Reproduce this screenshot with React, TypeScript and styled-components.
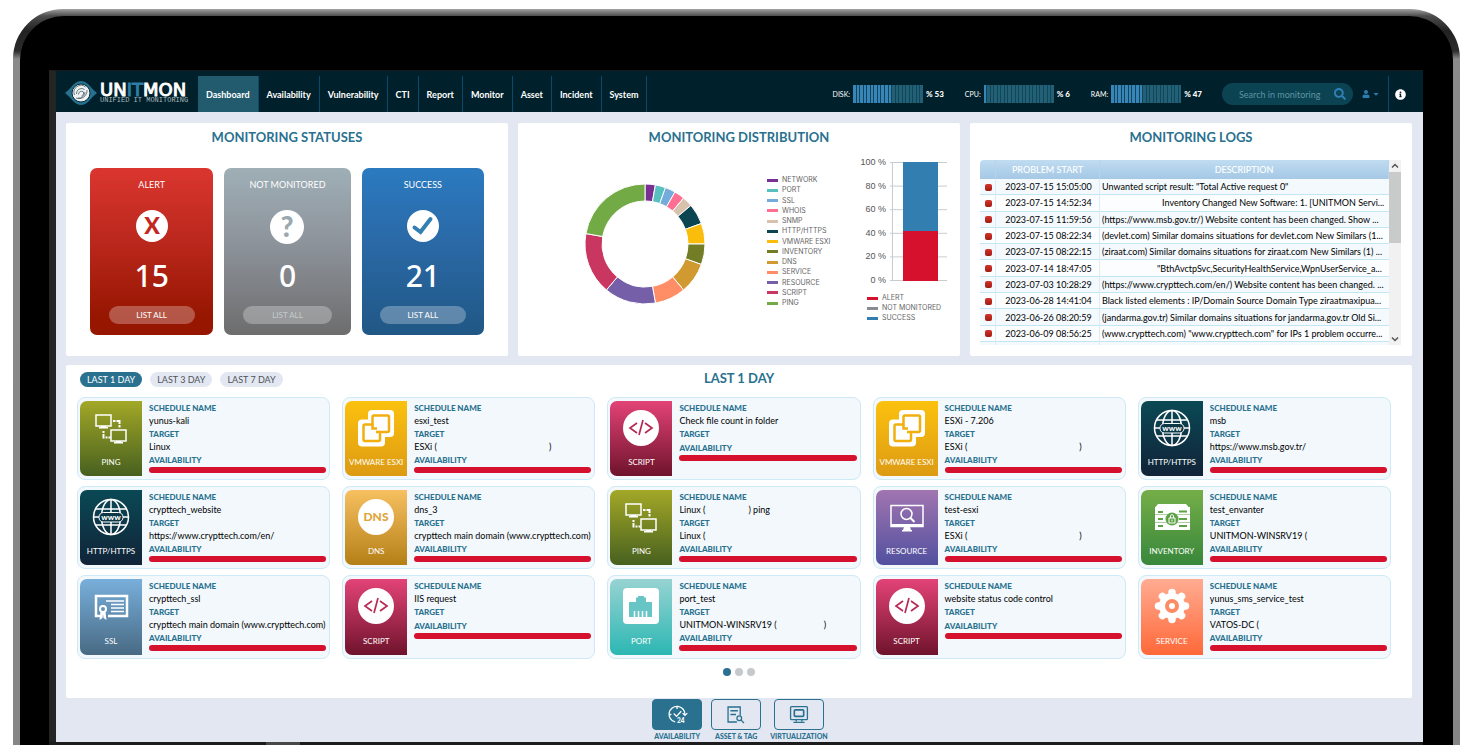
import React from "react";
import styled, { createGlobalStyle } from "styled-components";
import { FaUser, FaCaretDown, FaInfoCircle, FaSearch } from "react-icons/fa";

const C = {
  header: "#00212b",
  tab: "#225b6e",
  line: "#0b4a6b",
  page: "#e3e7f2",
  title: "#29718f",
  blue: "#337eb0",
  red: "#d6112d",
  card: "#f2f8fc",
  cardLine: "#cdeaf6",
};

const GlobalStyle = createGlobalStyle`
  *, *::before, *::after { box-sizing: border-box; }
  html { overflow: hidden auto; scrollbar-width: none; }
  body {
    margin: 0;
    background: #fff;
    font-family: Lato, "Liberation Sans", sans-serif;
    font-size: 9px;
    line-height: 13px;
    color: #000;
  }
  h2, p, ul, dl, dd { margin: 0; padding: 0; }
  ul { list-style: none; }
  svg { overflow: visible; }
  button, input { font: inherit; border: 0; padding: 0; margin: 0; background: none; color: inherit; }
  button { cursor: pointer; }
  a { color: inherit; text-decoration: none; }
`;

/* Device */
const Stage = styled.div`
  display: flex;
  min-height: 100vh;
  padding: 9px 15px 0 13px;
`;
const Frame = styled.div`
  flex: 1;
  min-width: 0;
  display: flex;
  padding: 7px 7px 0;
  border-radius: 50px 50px 0 0;
  background: linear-gradient(#a2a2a2 0, #4c4c4c 7px, #222 22px, #2c2c2c 42px, #8a8a8a 50px, #868686 100%);
`;
const Bezel = styled.div`
  flex: 1;
  min-width: 0;
  display: flex;
  flex-direction: column;
  padding: 54px 30px 0 29px;
  border-radius: 44px 44px 0 0;
  background: #000;
`;
const Screen = styled.div`
  flex: 1;
  display: flex;
  flex-direction: column;
  border-left: 7px solid #242424;
  border-top: 1px solid #1a1a1a;
  background: ${C.page};
`;
const Chin = styled.div`
  height: 3px;
  padding-left: 217px;
  background: #1c1c1c;
`;
const Notch = styled.div`
  width: 34px;
  height: 3px;
  background: #484848;
`;

/* Header */
const Header = styled.header`
  display: flex;
  height: 41px;
  padding: 5px 17px 0 9px;
  background: ${C.header};
  color: #fff;
`;
const Logo = styled.a`
  display: flex;
  align-items: center;
  gap: 3px;
  width: 133px;
  padding-bottom: 3px;
`;
const Brand = styled.span`
  display: block;
  padding-top: 1px;
`;
const BrandName = styled.span`
  display: block;
  font: 18px/14px "DejaVu Sans", sans-serif;
  -webkit-text-stroke: 1px currentColor;
  b { font-weight: 400; color: #2f7da6; }
`;
const BrandLine = styled.span`
  display: block;
  font: 7px/7px "Liberation Mono", monospace;
  white-space: nowrap;
  color: #a9b8be;
`;
const Nav = styled.nav`
  display: flex;
`;
const NavLink = styled.a<{ $active?: boolean }>`
  display: flex;
  align-items: center;
  padding: 0 8px;
  border-right: 1px solid ${C.line};
  background: ${(p) => (p.$active ? C.tab : "transparent")};
  font-size: 9px;
  font-weight: 700;
`;
const Tools = styled.div`
  display: flex;
  align-items: center;
  margin-left: auto;
`;
const Meters = styled.div`
  display: flex;
  gap: 21px;
  margin-right: 20px;
`;
const Meter = styled.div`
  display: flex;
  align-items: center;
  gap: 3px;
  font-size: 7px;
  b { font-size: 8px; font-weight: 900; }
`;
const Segments = styled.div`
  display: grid;
  grid-template-columns: repeat(20, 1fr);
  gap: 1px;
  width: 70px;
  height: 18px;
  background: #13455a;
`;
const Segment = styled.span<{ $on: boolean }>`
  background: ${(p) => (p.$on ? "#3885b9" : "#226076")};
`;
const Search = styled.form`
  display: flex;
  align-items: center;
  width: 131px;
  height: 22px;
  padding: 0 7px 0 17px;
  border-radius: 11px;
  background: #0b4352;
  color: #2f80b5;
  input { flex: 1; min-width: 0; outline: 0; font-size: 9px; }
  input::placeholder { color: #5f93a3; opacity: 1; }
  button { display: flex; }
`;
const UserMenu = styled.button`
  display: flex;
  align-items: center;
  gap: 2px;
  height: 36px;
  padding: 0 8px 0 9px;
  border-right: 1px solid ${C.line};
  color: #2c7cb0;
`;
const InfoButton = styled.button`
  display: flex;
  margin-left: 6px;
`;

/* Panels */
const Main = styled.main`
  flex: 1;
  display: flex;
  flex-direction: column;
  padding: 11px 11px 0 10px;
`;
const TopRow = styled.div`
  display: grid;
  grid-template-columns: repeat(3, minmax(0, 1fr));
  gap: 10px;
  margin-bottom: 9px;
`;
const Panel = styled.section`
  display: flex;
  flex-direction: column;
  min-height: 233px;
  border-radius: 2px;
  background: #fff;
`;
const Title = styled.h2`
  font-size: 13px;
  line-height: 18px;
  font-weight: 700;
  text-align: center;
  color: ${C.title};
`;
const PanelTitle = styled(Title)`
  padding-top: 5px;
`;

/* Statuses */
const StatusRow = styled.div`
  display: grid;
  grid-template-columns: 123fr 126fr 122fr;
  gap: 11px;
  padding: 22px 24px 0;
`;
const StatusCard = styled.article<{ $bg: string }>`
  display: flex;
  flex-direction: column;
  align-items: center;
  height: 167px;
  padding-top: 10px;
  border-radius: 7px;
  background: linear-gradient(${(p) => p.$bg});
  color: #fff;
`;
const StatusMark = styled.svg`
  width: 36px;
  height: 36px;
  margin-top: 17px;
`;
const Count = styled.strong`
  margin-top: 14px;
  font: 500 30px/36px "Noto Sans", sans-serif;
`;
const ListAll = styled.button<{ $muted?: boolean }>`
  width: 70%;
  height: 18px;
  margin-top: 12px;
  border-radius: 9px;
  background: rgba(255, 255, 255, 0.28);
  font-size: 8px;
  line-height: 18px;
  color: ${(p) => (p.$muted ? "#c3cacd" : "#fff")};
`;

/* Distribution */
const Charts = styled.div`
  display: flex;
  padding: 15px 10px 0 67px;
`;
const Donut = styled.svg`
  width: 120px;
  height: 122px;
  margin-top: 22px;
`;
const DonutLegend = styled.ul`
  display: flex;
  flex-direction: column;
  justify-content: space-between;
  height: 133px;
  margin: 14px auto 0 62px;
`;
const Key = styled.li<{ $c: string }>`
  display: flex;
  align-items: center;
  gap: 4px;
  font: 7px/10px Inter, sans-serif;
  color: #666;
  white-space: nowrap;
  &::before { content: ""; width: 11px; height: 3px; background: ${(p) => p.$c}; }
`;
const BarBlock = styled.div`
  width: 90px;
`;
const BarChart = styled.svg`
  display: block;
  width: 90px;
  height: 130px;
  text { font: 9px "Liberation Sans", sans-serif; fill: #555; text-anchor: end; }
`;
const BarLegend = styled.ul`
  margin: 2px 0 0 7px;
`;

/* Logs */
const LogBox = styled.div`
  display: flex;
  height: 185px;
  margin: 14px 11px 0 10px;
  overflow: hidden;
`;
const LogTable = styled.table`
  flex: 1;
  min-width: 0;
  height: 185px;
  border-collapse: separate;
  border-spacing: 0;
  table-layout: fixed;
  line-height: 12px;
  white-space: nowrap;
  th {
    height: 19px;
    padding: 0;
    background: linear-gradient(#bfdcf1, #a5c8e5);
    border-right: 1px solid #b7d5ea;
    font-weight: 500;
    color: #fff;
  }
  th:first-child { border-top-left-radius: 4px; }
  td {
    padding: 1px 0 0 2px;
    border-right: 1px solid #dcecf6;
    border-bottom: 1px solid #c3e6f7;
    overflow: hidden;
  }
  td:first-child { padding-left: 5px; }
  td:last-child { border-right: 0; }
  tbody tr:nth-child(odd) td { background: #f3f9fd; }
  tbody tr:nth-child(even) td { background: #fbfdff; }
`;
const Time = styled.td`
  text-align: center;
`;
const Flag = styled.span`
  display: block;
  width: 7px;
  height: 7px;
  border-radius: 2px;
  background: linear-gradient(#d3342c, #a01c10);
`;
const TailRow = styled.tr`
  height: 3px;
  td { padding: 0; border-bottom: 0; }
`;
const ScrollBar = styled.div`
  display: flex;
  flex-direction: column;
  justify-content: space-between;
  width: 12px;
  background: #f1f1f1;
`;
const ScrollTop = styled.div`
  display: flex;
  flex-direction: column;
`;
const ScrollThumb = styled.div`
  height: 71px;
  background: #c9caca;
`;
const ScrollArrow = styled.svg`
  width: 12px;
  height: 12px;
`;
const Masked = styled.span<{ $w: number }>`
  display: inline-block;
  width: ${(p) => p.$w}px;
`;

/* Schedules */
const Schedules = styled(Panel)`
  min-height: 333px;
  padding: 4px 21px 0 11px;
`;
const ScheduleHead = styled.div`
  display: grid;
  grid-template-columns: 1fr auto 1fr;
  height: 28px;
  margin: 0 -7px 0 3px;
`;
const Ranges = styled.div`
  display: flex;
  gap: 8px;
  padding-top: 3px;
`;
const Range = styled.button<{ $active?: boolean }>`
  height: 15px;
  padding: 0 7px;
  border-radius: 8px;
  line-height: 15px;
  background: ${(p) => (p.$active ? C.title : C.page)};
  color: ${(p) => (p.$active ? "#fff" : "#4d5357")};
`;
const Cards = styled.div`
  display: grid;
  grid-template-columns: repeat(5, minmax(0, 1fr));
  grid-template-rows: 83px 83px 84px;
  gap: 6px 12px;
`;
const Card = styled.article`
  display: flex;
  gap: 7px;
  padding: 3px 3px 3px 2px;
  border: 1px solid ${C.cardLine};
  border-radius: 8px;
  background: ${C.card};
`;
const Tile = styled.div<{ $bg: string }>`
  display: flex;
  flex-direction: column;
  align-items: center;
  justify-content: space-between;
  flex: none;
  width: 62px;
  padding: 8px 0 7px;
  border-radius: 7px 0 0 7px;
  background: linear-gradient(${(p) => p.$bg});
  font-size: 8px;
  white-space: nowrap;
  color: #fff;
`;
const TileIcon = styled.svg`
  width: 38px;
  height: 38px;
`;
const Info = styled.dl`
  flex: 1;
  min-width: 0;
  white-space: nowrap;
  dt { font-size: 8px; line-height: 14px; font-weight: 900; color: ${C.title}; }
  dd { line-height: 12px; }
`;
const Bar = styled.dd`
  height: 6px;
  border-radius: 3px;
  background: ${C.red};
`;
const Pager = styled.div`
  display: flex;
  justify-content: center;
  gap: 4px;
  margin: 9px 0 0 10px;
`;
const Dot = styled.button<{ $active?: boolean }>`
  width: 8px;
  height: 8px;
  border-radius: 50%;
  background: ${(p) => (p.$active ? C.title : "#c5c9cb")};
`;

/* Footer */
const Footer = styled.footer`
  display: flex;
  justify-content: center;
  gap: 9px;
  height: 44px;
  padding: 1px 0 0 2px;
`;
const Mode = styled.button<{ $active?: boolean }>`
  display: flex;
  flex-direction: column;
  align-items: center;
  font-size: 7px;
  line-height: 10px;
  font-weight: 900;
  color: ${C.title};
  svg {
    width: 50px;
    height: 31px;
    margin-bottom: 1px;
    border: 1px solid ${C.title};
    border-radius: 4px;
    background: ${(p) => (p.$active ? C.title : "transparent")};
    color: ${(p) => (p.$active ? "#fff" : C.title)};
  }
`;

/* Schedule icons */
const monitor = (x: number, y: number) => (
  <>
    <path d={`M${x} ${y}h15v11h-15z`} fill="none" stroke="#fff" strokeWidth="1.500" />
    <path d={`M${x + 5} ${y + 11}h5v1h2v1.500h-9V${y + 12}h2z`} fill="#fff" />
  </>
);
const Circle = () => <circle cx="19" cy="19" r="18" fill="#fff" />;

const ICONS: Record<string, React.ReactNode> = {
  PING: (
    <>
      {monitor(4, 6)}
      {monitor(19, 21)}
      <path d="M21 12h2.500M24.500 12h4M27.500 12v3M27.500 16v2.500" stroke="#fff" strokeWidth="2" />
      <path d="M11.500 22v2M11.500 25v4.500M13.500 28.500h2M16.500 28.500h2" stroke="#fff" strokeWidth="2" />
    </>
  ),
  "VMWARE ESXI": (
    <>
      <rect x="11" y="1" width="26" height="27" rx="4" fill="#fff" />
      <rect x="1" y="10.500" width="27" height="27" rx="4" fill="#fff" />
      <g fill="none" stroke="#f2b00f" strokeWidth="2.500">
        <path d="M15.500 15.500V8q0-1.500 1.500-1.500h13.500q1.500 0 1.500 1.500v13.500q0 1.500-1.500 1.500H23v7.500q0 1.500-1.500 1.500H8q-1.500 0-1.500-1.500V17q0-1.500 1.500-1.500z" />
        <path d="M15.500 15.500v4h4.500M23 23h-4" />
      </g>
    </>
  ),
  SCRIPT: (
    <>
      <Circle />
      <path d="M15 14l-7 5 7 5M23 14l7 5-7 5M21 11l-4 15" fill="none" stroke="#b62a55" strokeWidth="1.700" />
    </>
  ),
  "HTTP/HTTPS": (
    <>
      <g fill="none" stroke="#fff" strokeWidth="1.500">
        <circle cx="19" cy="19" r="17.500" />
        <ellipse cx="19" cy="19" rx="9.500" ry="17.500" />
        <path d="M19 2v12M19 24v12M4 11h30M4 27h30M2 19h5M31 19h5" />
      </g>
      <rect x="7" y="14.500" width="24" height="9.500" rx="4.500" fill="#0b3746" stroke="#fff" />
      <text x="19" y="21.500" fontSize="8" fontWeight="900" textAnchor="middle" fill="#fff">www</text>
    </>
  ),
  DNS: (
    <>
      <Circle />
      <text x="19" y="23" fontSize="12" fontWeight="900" textAnchor="middle" fill="#e0a53c">DNS</text>
    </>
  ),
  RESOURCE: (
    <>
      <path d="M3 7.500h32v21h-32z" fill="none" stroke="#fff" strokeWidth="1.500" />
      <path d="M3 26h32v3H22l1 3h1v1.500H14V32h1l1-3H3z" fill="#fff" />
      <circle cx="18.500" cy="16" r="5.500" fill="none" stroke="#fff" strokeWidth="1.500" />
      <path d="M22.500 20l4 4" stroke="#fff" strokeWidth="2" />
    </>
  ),
  INVENTORY: (
    <>
      <path d="M5 6h28l3 3.500H2z" fill="#fff" />
      <path d="M2 9h35v7.500H2zM2 17h35v7.500H2zM2 25h35v7H2z" fill="#fff" />
      <path d="M5 14h5M5 21h5M5 28h5M26 13.500h8M26 21h8M26 28h8" stroke="#5da245" strokeWidth="2" />
      <circle cx="19" cy="21" r="6.500" fill="#5da245" />
      <path d="M16 20h6v5h-6zM17.500 20v-2.500q1.500-2 3 0V20M19 21.500v2" fill="none" stroke="#fff" />
    </>
  ),
  SSL: (
    <>
      <path d="M9 29H4V9h31v20H16" fill="none" stroke="#fff" strokeWidth="2.500" />
      <path d="M14 14h18M19 17.500h13M19 21h13M19 24.500h13" stroke="#fff" strokeWidth="1.500" />
      <circle cx="11" cy="22" r="3" fill="none" stroke="#fff" strokeWidth="2" />
      <path d="M8.500 25l-1 8 3-2 .5-4 .5 4 3 2-1-8z" fill="#fff" />
    </>
  ),
  PORT: (
    <>
      <rect x="1" y="1" width="36" height="36" rx="4" fill="#fff" />
      <path d="M7 30V15h7v-4.500h2V9h6v1.500h2V15h6v15z" fill="#68c5c5" />
      <path d="M12.500 24v6M16.500 24v6M20.500 24v6M24.500 24v6" stroke="#fff" strokeWidth="1.500" />
    </>
  ),
  SERVICE: (
    <>
      <circle cx="19" cy="19" r="13" fill="#fff" />
      {[0, 45, 90, 135].map((a) => (
        <path key={a} d="M19 5.500v27" stroke="#fff" strokeWidth="7.500" strokeLinecap="round" transform={`rotate(${a} 19 19)`} />
      ))}
      <circle cx="19" cy="19" r="5" fill="#fff" stroke="#ff8a66" strokeWidth="4" />
    </>
  ),
};

const TILE_BG: Record<string, string> = {
  PING: "#a3a827, #47601f",
  "VMWARE ESXI": "#fbc10e, #dd9b14",
  SCRIPT: "#e34377, #6f132c",
  "HTTP/HTTPS": "#0a4955, #112338",
  DNS: "#f7c060, #b57f17",
  RESOURCE: "#a175b0, #52509f",
  INVENTORY: "#75ae48, #38873b",
  SSL: "#78afdb, #486a84",
  PORT: "#97d3d2, #2cb7b3",
  SERVICE: "#ffac92, #ff6838",
};

type Value = string | [string, number, string];
const SCHEDULES: { kind: string; name: Value; target?: Value }[] = [
  { kind: "PING", name: "yunus-kali", target: "Linux" },
  { kind: "VMWARE ESXI", name: "esxi_test", target: ["ESXi (", 112, ")"] },
  { kind: "SCRIPT", name: "Check file count in folder" },
  { kind: "VMWARE ESXI", name: "ESXi - 7.206", target: ["ESXi (", 112, ")"] },
  { kind: "HTTP/HTTPS", name: "msb", target: "https://www.msb.gov.tr/" },
  { kind: "HTTP/HTTPS", name: "crypttech_website", target: "https://www.crypttech.com/en/" },
  { kind: "DNS", name: "dns_3", target: "crypttech main domain (www.crypttech.com)" },
  { kind: "PING", name: ["Linux (", 43, ") ping"], target: "Linux (" },
  { kind: "RESOURCE", name: "test-esxi", target: ["ESXi (", 112, ")"] },
  { kind: "INVENTORY", name: "test_envanter", target: "UNITMON-WINSRV19 (" },
  { kind: "SSL", name: "crypttech_ssl", target: "crypttech main domain (www.crypttech.com)" },
  { kind: "SCRIPT", name: "IIS request" },
  { kind: "PORT", name: "port_test", target: ["UNITMON-WINSRV19 (", 47, ")"] },
  { kind: "SCRIPT", name: "website status code control" },
  { kind: "SERVICE", name: "yunus_sms_service_test", target: "VATOS-DC (" },
];

const LOGS: [string, string, number?][] = [
  ["2023-07-15 15:05:00", 'Unwanted script result: "Total Active request 0"'],
  ["2023-07-15 14:52:34", "Inventory Changed New Software: 1. [UNITMON Servi...", 60],
  ["2023-07-15 11:59:56", "(https://www.msb.gov.tr/) Website content has been changed. Show ..."],
  ["2023-07-15 08:22:34", "(devlet.com) Similar domains situations for devlet.com New Similars (1..."],
  ["2023-07-15 08:22:15", "(ziraat.com) Similar domains situations for ziraat.com New Similars (1) ..."],
  ["2023-07-14 18:47:05", '"BthAvctpSvc,SecurityHealthService,WpnUserService_a...', 55],
  ["2023-07-03 10:28:29", "(https://www.crypttech.com/en/) Website content has been changed. ..."],
  ["2023-06-28 14:41:04", "Black listed elements : IP/Domain Source Domain Type ziraatmaxipua..."],
  ["2023-06-26 08:20:59", "(jandarma.gov.tr) Similar domains situations for jandarma.gov.tr Old Si..."],
  ["2023-06-09 08:56:25", '(www.crypttech.com) "www.crypttech.com" for IPs 1 problem occurre...'],
];

const SLICES: [string, number, string][] = [
  ["NETWORK", 1, "#7a2f92"],
  ["PORT", 1, "#58c1c0"],
  ["SSL", 1, "#73abdb"],
  ["WHOIS", 1, "#ff6f93"],
  ["SNMP", 1, "#d9c2ad"],
  ["HTTP/HTTPS", 2, "#0a4551"],
  ["VMWARE ESXI", 2, "#fabd0c"],
  ["INVENTORY", 2, "#727d26"],
  ["DNS", 3, "#d09a31"],
  ["SERVICE", 3, "#ff8d66"],
  ["RESOURCE", 5, "#745fa8"],
  ["SCRIPT", 6, "#c93660"],
  ["PING", 8, "#72ab45"],
];

const point = (turn: number, r: number) => {
  const a = turn * 2 * Math.PI;
  return `${(60 + r * Math.sin(a)).toFixed(2)} ${(61 - r * Math.cos(a)).toFixed(2)}`;
};

function DonutChart() {
  const total = SLICES.reduce((sum, s) => sum + s[1], 0);
  let start = 0;
  return (
    <Donut viewBox="0 0 120 122" role="img" aria-label="Monitoring distribution">
      {SLICES.map(([name, n, color]) => {
        const a = start / total;
        start += n;
        const b = start / total;
        return (
          <path
            key={name}
            d={`M${point(a, 60)}A60 60 0 0 1 ${point(b, 60)}L${point(b, 43)}A43 43 0 0 0 ${point(a, 43)}Z`}
            fill={color}
            stroke="#fff"
          />
        );
      })}
    </Donut>
  );
}

const show = (v: Value) =>
  typeof v === "string" ? v : (
    <>
      {v[0]}
      <Masked $w={v[1]} />
      {v[2]}
    </>
  );

function Gauge({ label, value }: { label: string; value: number }) {
  return (
    <Meter>
      <span>{label}:</span>
      <Segments>
        {Array.from({ length: 20 }, (_, i) => (
          <Segment key={i} $on={i < Math.round(value / 5)} />
        ))}
      </Segments>
      <b>% {value}</b>
    </Meter>
  );
}

const NAV = ["Dashboard", "Availability", "Vulnerability", "CTI", "Report", "Monitor", "Asset", "Incident", "System"];

export default function App() {
  return (
    <>
      <GlobalStyle />
      <Stage>
        <Frame>
          <Bezel>
            <Screen>
              <Header>
                <Logo href="#">
                  <svg width="32" height="26" viewBox="0 0 32 26">
                    <path d="M0 13Q5 9 8 5 16-3 24 5q3 4 8 8-5 4-8 8-8 8-16 0-3-4-8-8z" fill="#26718f" />
                    <circle cx="16" cy="13" r="9" fill="#eef2f3" stroke="#0b2a36" strokeWidth="1" />
                    <g fill="none" stroke="#4a5c64" strokeWidth="0.800">
                      <path d="M9.500 15a7 7 0 0 1 11-8M11 18a8 8 0 0 0 11-8M11.500 14a5 5 0 0 1 8-4.500M13 18a6 6 0 0 0 7-6" />
                      <path d="M13.500 14.500a3 3 0 0 1 5-2.500q1 3-2 4" />
                    </g>
                  </svg>
                  <Brand>
                    <BrandName>UN<b>IT</b>MON</BrandName>
                    <BrandLine>UNIFIED IT MONITORING</BrandLine>
                  </Brand>
                </Logo>
                <Nav>
                  {NAV.map((n, i) => (
                    <NavLink key={n} href="#" $active={i === 0}>{n}</NavLink>
                  ))}
                </Nav>
                <Tools>
                  <Meters>
                    <Gauge label="DISK" value={53} />
                    <Gauge label="CPU" value={6} />
                    <Gauge label="RAM" value={47} />
                  </Meters>
                  <Search>
                    <input aria-label="Search in monitoring" placeholder="Search in monitoring" />
                    <button type="button" aria-label="Search"><FaSearch size={12} /></button>
                  </Search>
                  <UserMenu aria-label="User menu">
                    <FaUser size={8} />
                    <FaCaretDown size={8} />
                  </UserMenu>
                  <InfoButton aria-label="Information"><FaInfoCircle size={11} /></InfoButton>
                </Tools>
              </Header>

              <Main>
                <TopRow>
                  <Panel>
                    <PanelTitle>MONITORING STATUSES</PanelTitle>
                    <StatusRow>
                      <StatusCard $bg="#da362f, #ba271c 45%, #961600 90%">
                        <span>ALERT</span>
                        <StatusMark viewBox="0 0 36 36">
                          <circle cx="18" cy="18" r="16" fill="#fff" />
                          <text x="18" y="26" fontSize="23" fontWeight="900" textAnchor="middle" fill="#c3271d">X</text>
                        </StatusMark>
                        <Count>15</Count>
                        <ListAll>LIST ALL</ListAll>
                      </StatusCard>
                      <StatusCard $bg="#9fafb6, #8d939b 45%, #6d6d6d">
                        <span>NOT MONITORED</span>
                        <StatusMark viewBox="0 0 36 36">
                          <circle cx="18" cy="19" r="17" fill="#fff" />
                          <text x="18" y="29" fontSize="28" fontWeight="900" textAnchor="middle" fill="#9aa9b0">?</text>
                        </StatusMark>
                        <Count>0</Count>
                        <ListAll $muted>LIST ALL</ListAll>
                      </StatusCard>
                      <StatusCard $bg="#2b7ac0, #2a69a6 45%, #205785">
                        <span>SUCCESS</span>
                        <StatusMark viewBox="0 0 36 36">
                          <circle cx="18" cy="18" r="16" fill="#fff" />
                          <path d="M9.500 19.500l6 4.500L25.500 11" fill="none" stroke="#327fb1" strokeWidth="4" strokeLinecap="round" />
                        </StatusMark>
                        <Count>21</Count>
                        <ListAll>LIST ALL</ListAll>
                      </StatusCard>
                    </StatusRow>
                  </Panel>

                  <Panel>
                    <PanelTitle>MONITORING DISTRIBUTION</PanelTitle>
                    <Charts>
                      <DonutChart />
                      <DonutLegend>
                        {SLICES.map(([name, , color]) => (
                          <Key key={name} $c={color}>{name}</Key>
                        ))}
                      </DonutLegend>
                      <BarBlock>
                        <BarChart viewBox="0 0 90 130" role="img" aria-label="Status share">
                          {[100, 80, 60, 40, 20, 0].map((v) => {
                            const y = 1 + (100 - v) * 1.18;
                            return (
                              <g key={v}>
                                <path d={`M30 ${y + 0.5}h57`} stroke="#c9cccf" />
                                <text x="26" y={y + 3}>{v} %</text>
                              </g>
                            );
                          })}
                          <path d="M32.500 1v119" stroke="#c9cccf" />
                          <path d="M43 1h35v70H43z" fill={C.blue} />
                          <path d="M43 70h35v50H43z" fill={C.red} />
                        </BarChart>
                        <BarLegend>
                          <Key $c={C.red}>ALERT</Key>
                          <Key $c="#868c91">NOT MONITORED</Key>
                          <Key $c={C.blue}>SUCCESS</Key>
                        </BarLegend>
                      </BarBlock>
                    </Charts>
                  </Panel>

                  <Panel>
                    <PanelTitle>MONITORING LOGS</PanelTitle>
                    <LogBox>
                      <LogTable>
                        <colgroup>
                          <col style={{ width: 16 }} />
                          <col style={{ width: 104 }} />
                          <col />
                        </colgroup>
                        <thead>
                          <tr>
                            <th aria-label="Status" />
                            <th>PROBLEM START</th>
                            <th>DESCRIPTION</th>
                          </tr>
                        </thead>
                        <tbody>
                          {LOGS.map(([time, text, mask]) => (
                            <tr key={time}>
                              <td><Flag /></td>
                              <Time>{time}</Time>
                              <td>{mask && <Masked $w={mask} />}{text}</td>
                            </tr>
                          ))}
                          <TailRow><td /><td /><td /></TailRow>
                        </tbody>
                      </LogTable>
                      <ScrollBar>
                        <ScrollTop>
                          <ScrollArrow viewBox="0 0 12 12"><path d="M3 7.500l3-3 3 3" fill="none" stroke="#555" strokeWidth="1.500" /></ScrollArrow>
                          <ScrollThumb />
                        </ScrollTop>
                        <ScrollArrow viewBox="0 0 12 12"><path d="M3 4.500l3 3 3-3" fill="none" stroke="#555" strokeWidth="1.500" /></ScrollArrow>
                      </ScrollBar>
                    </LogBox>
                  </Panel>
                </TopRow>

                <Schedules>
                  <ScheduleHead>
                    <Ranges>
                      <Range $active>LAST 1 DAY</Range>
                      <Range>LAST 3 DAY</Range>
                      <Range>LAST 7 DAY</Range>
                    </Ranges>
                    <Title>LAST 1 DAY</Title>
                  </ScheduleHead>
                  <Cards>
                    {SCHEDULES.map((s, i) => (
                      <Card key={i}>
                        <Tile $bg={TILE_BG[s.kind]}>
                          <TileIcon viewBox="0 0 38 38">{ICONS[s.kind]}</TileIcon>
                          {s.kind}
                        </Tile>
                        <Info>
                          <dt>SCHEDULE NAME</dt>
                          <dd>{show(s.name)}</dd>
                          <dt>TARGET</dt>
                          {s.target && <dd>{show(s.target)}</dd>}
                          <dt>AVAILABILITY</dt>
                          <Bar />
                        </Info>
                      </Card>
                    ))}
                  </Cards>
                  <Pager>
                    <Dot $active aria-label="Page 1" />
                    <Dot aria-label="Page 2" />
                    <Dot aria-label="Page 3" />
                  </Pager>
                </Schedules>
                <Footer>
                  <Mode $active>
                    <svg viewBox="0 0 50 31" fill="none" stroke="currentColor" strokeWidth="1.400">
                      <path d="M23 23.500a8.500 8.500 0 1 1 10.500-8" />
                      <path d="M31 14l2.500 2.500 2.500-2.500M25 7v2.500M17 15.500h2M21.500 14.500l3 3 5-5.500" />
                      <text x="25" y="24.500" fontSize="7" fontWeight="900" fill="currentColor" stroke="none">24</text>
                    </svg>
                    AVAILABILITY
                  </Mode>
                  <Mode>
                    <svg viewBox="0 0 50 31" fill="none" stroke="currentColor" strokeWidth="1.400">
                      <path d="M26 23.500h-9.500v-16h13v9M19 11.500h8M19 15.500h6" />
                      <circle cx="28.500" cy="19.500" r="2.500" />
                      <path d="M30.500 21.500l3 3" />
                    </svg>
                    {"ASSET & TAG"}
                  </Mode>
                  <Mode>
                    <svg viewBox="0 0 50 31" fill="none" stroke="currentColor" strokeWidth="1.400">
                      <rect x="16" y="7" width="18" height="14" rx="1" />
                      <rect x="20" y="10.500" width="10" height="7" rx="1" strokeWidth="1.800" />
                      <path d="M22 21v2M28 21v2M19 24h12" />
                    </svg>
                    VIRTUALIZATION
                  </Mode>
                </Footer>
              </Main>
            </Screen>
            <Chin><Notch /></Chin>
          </Bezel>
        </Frame>
      </Stage>
    </>
  );
}
